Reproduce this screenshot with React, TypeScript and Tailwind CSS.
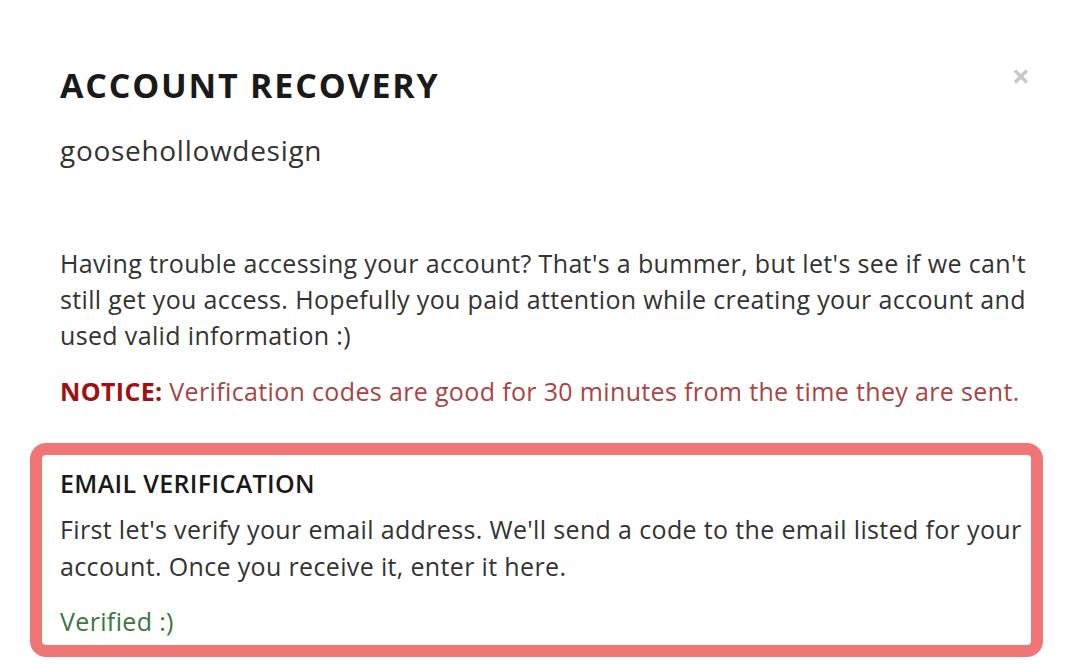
export default function App() {
  return (
    <div
      className="relative h-[664px] w-[1084px] overflow-hidden bg-white text-[#333333]"
      style={{ fontFamily: '"Open Sans", sans-serif' }}
    >
      <button className="absolute right-[54px] top-[60px] text-[32px] font-bold leading-none text-[#c8c8c8]">
        ×
      </button>
      <div className="pl-[60px] pr-[40px] pt-[62px]">
        <h1 className="text-[34px] font-bold leading-[46px] tracking-[1.8px] text-[#1a1a1a]">
          ACCOUNT RECOVERY
        </h1>
        <p className="mt-[23px] text-[28px] leading-[38px] tracking-[0.7px]">goosehollowdesign</p>
        <p className="mt-[76px] text-[25px] leading-[36px] tracking-[0.35px]">
          Having trouble accessing your account? That's a bummer, but let's see if we can't still get you
          access. Hopefully you paid attention while creating your account and used valid information :)
        </p>
        <p className="mt-[20px] text-[25px] leading-[36px] tracking-[0.35px] text-[#a94442]">
          <span className="font-bold text-[#a01010]">NOTICE:</span> Verification codes are good for 30
          minutes from the time they are sent.
        </p>
      </div>
      <div className="ml-[30px] mt-[34px] w-[1013px] rounded-[16px] border-[12px] border-[#f07575] pl-[18px] pr-[4px] pt-[10px] pb-[6px]">
        <h2 className="text-[25px] font-semibold leading-[36px] tracking-[0.35px] text-[#1a1a1a]">
          EMAIL VERIFICATION
        </h2>
        <p className="mt-[10px] text-[25px] leading-[37px] tracking-[0.35px]">
          First let's verify your email address. We'll send a code to the email listed for your account.
          Once you receive it, enter it here.
        </p>
        <p className="mt-[18px] text-[25px] leading-[36px] tracking-[0.35px] text-[#3c763d]">Verified :)</p>
      </div>
    </div>
  );
}
